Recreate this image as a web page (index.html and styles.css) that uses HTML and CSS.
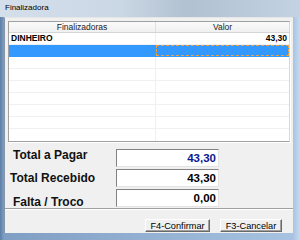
FILE: index.html
```html
<!DOCTYPE html>
<html lang="pt-BR">
<head>
    <meta charset="UTF-8">
    <meta name="viewport" content="width=device-width, initial-scale=1.0">
    <title>Finalizadora</title>
    <link rel="stylesheet" href="styles.css">
</head>
<body>
    <div class="window">
        <div class="titlebar">Finalizadora</div>
        <div class="client">
            <div class="top-panel">
                <div class="grid">
                    <div class="row head">
                        <div class="cell col-name">Finalizadoras</div>
                        <div class="cell col-value">Valor</div>
                    </div>
                    <div class="row">
                        <div class="cell col-name bold">DINHEIRO</div>
                        <div class="cell col-value bold num">43,30</div>
                    </div>
                    <div class="row selected">
                        <div class="cell col-name"></div>
                        <div class="cell col-value focus"></div>
                    </div>
                    <div class="row"><div class="cell col-name"></div><div class="cell col-value"></div></div>
                    <div class="row"><div class="cell col-name"></div><div class="cell col-value"></div></div>
                    <div class="row"><div class="cell col-name"></div><div class="cell col-value"></div></div>
                    <div class="row"><div class="cell col-name"></div><div class="cell col-value"></div></div>
                    <div class="row"><div class="cell col-name"></div><div class="cell col-value"></div></div>
                    <div class="row"><div class="cell col-name"></div><div class="cell col-value"></div></div>
                    <div class="row last"><div class="cell col-name"></div><div class="cell col-value"></div></div>
                </div>
            </div>

            <div class="totals">
                <div class="labels">
                    <div class="label">Total a Pagar</div>
                    <div class="label shift">Total Recebido</div>
                    <div class="label">Falta / Troco</div>
                </div>
                <div class="fields">
                    <div class="field blue">43,30</div>
                    <div class="field">43,30</div>
                    <div class="field">0,00</div>
                </div>
            </div>

            <div class="buttons">
                <button class="btn btn-confirm">F4-Confirmar</button>
                <button class="btn btn-cancel">F3-Cancelar</button>
            </div>
        </div>
    </div>
</body>
</html>
```

FILE: styles.css
```css
body {
    margin: 0;
    padding: 0;
    background: #fff;
    font-family: 'Liberation Sans', Arial, sans-serif;
}

.window {
    width: 300px;
    height: 240px;
    display: flex;
    flex-direction: column;
    background: linear-gradient(90deg, #5d7ea6 0, #7f9ec3 4px, #a8c3e1 293px, #c6dbf0 300px);
}

.titlebar {
    height: 17px;
    padding-left: 5px;
    font-size: 8px;
    line-height: 16px;
    color: #000;
    background: linear-gradient(90deg, #d4dfeb 0, #cad7e5 40%, #b2c1d1 62%, #bccbdb 85%, #c3d3e3 100%);
}

.client {
    flex: 1;
    margin: 0 7px 7px 4px;
    display: flex;
    flex-direction: column;
    background: #f0f0f0;
    border-left: 1px solid #8594a6;
    border-top: 1px solid #e6e6e6;
}

/* grid */

.top-panel {
    padding: 3px 0 0 3px;
}

.grid {
    width: 280px;
    border: 1px solid #a0a0a0;
    border-right-color: #d8d8d8;
    background: #fff;
    box-shadow: 1px 1px 0 #fff;
}

.row {
    display: flex;
    height: 11px;
    border-bottom: 1px solid #f0f0f0;
    font-size: 8.5px;
    line-height: 11px;
    color: #000;
}

.row.last {
    border-bottom: none;
    height: 12px;
}

.row.head {
    background: linear-gradient(#fafafa, #f0f0f0);
    border-bottom: 1px solid #d5d5d5;
    height: 10px;
    line-height: 10px;
}

.row.head .cell {
    text-align: center;
    color: #222;
}

.cell {
    box-sizing: border-box;
    height: 100%;
    padding: 0 2px;
    white-space: nowrap;
}

.col-name {
    width: 147px;
    border-right: 1px solid #f0f0f0;
}

.col-value {
    flex: 1;
}

.row.head .col-name {
    border-right-color: #e0e0e0;
}

.bold {
    font-weight: bold;
}

.num {
    text-align: right;
}

.row.selected {
    background: #3399ff;
    border-bottom-color: #3399ff;
}

.row.selected .col-name {
    border-right-color: #3399ff;
}

.focus {
    border: 1px dashed #f0a040;
}

/* totals */

.totals {
    display: flex;
    margin-top: 2px;
    height: 64px;
    border-bottom: 1px solid #a0a0a0;
    box-shadow: 0 1px 0 #fff;
}

.labels {
    width: 111px;
    display: flex;
    flex-direction: column;
    gap: 9.25px;
    padding-top: 4px;
}

.label {
    height: 14px;
    line-height: 14px;
    padding-left: 8px;
    font-size: 12px;
    font-weight: bold;
    color: #111;
}

.label.shift {
    padding-left: 5px;
}

.fields {
    display: flex;
    flex-direction: column;
    gap: 2px;
    padding-top: 5px;
}

.field {
    box-sizing: border-box;
    width: 103px;
    height: 18px;
    padding-right: 2px;
    border: 1px solid;
    border-color: #828282 #e3e3e3 #e3e3e3 #828282;
    background: #fff;
    text-align: right;
    font-size: 11.5px;
    font-weight: bold;
    line-height: 16px;
    color: #000;
}

.field.blue {
    color: #0a1890;
}

/* buttons */

.buttons {
    display: flex;
    justify-content: flex-end;
    gap: 10px;
    padding: 10px 11px 0 0;
}

.btn {
    box-sizing: border-box;
    height: 13px;
    padding: 0;
    border: 1px solid;
    border-color: #fff #696969 #696969 #fff;
    box-shadow: inset -1px -1px 0 #a0a0a0;
    background: #f0f0f0;
    font-family: 'Liberation Sans', Arial, sans-serif;
    font-size: 9.2px;
    line-height: 10px;
    color: #000;
}

.btn-confirm {
    width: 65px;
}

.btn-cancel {
    width: 62px;
}
```
